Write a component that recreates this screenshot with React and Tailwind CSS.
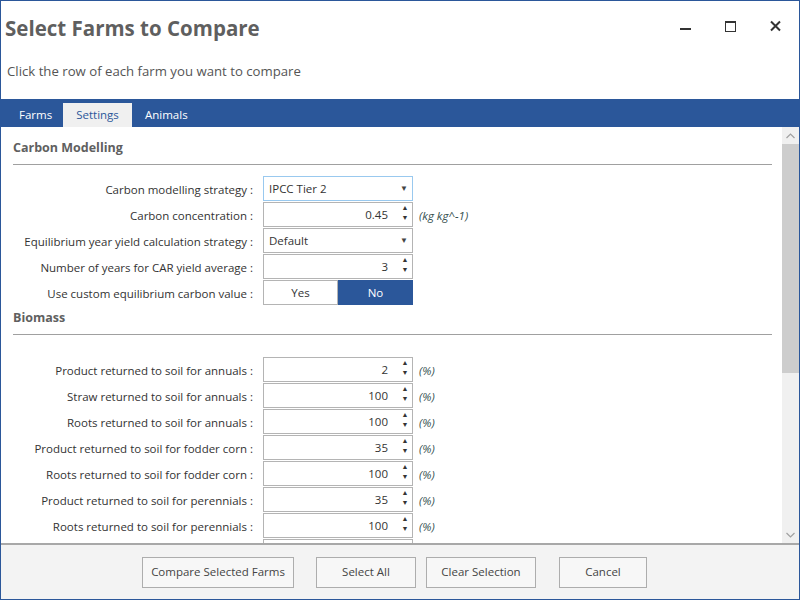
import React from "react";

const carbonRows = [
  { label: "Carbon modelling strategy :", type: "select", value: "IPCC Tier 2", focused: true },
  { label: "Carbon concentration :", type: "number", value: "0.45", unit: "(kg kg^-1)" },
  { label: "Equilibrium year yield calculation strategy :", type: "select", value: "Default" },
  { label: "Number of years for CAR yield average :", type: "number", value: "3" },
  { label: "Use custom equilibrium carbon value :", type: "toggle" },
];

const biomassRows = [
  { label: "Product returned to soil for annuals :", value: "2" },
  { label: "Straw returned to soil for annuals :", value: "100" },
  { label: "Roots returned to soil for annuals :", value: "100" },
  { label: "Product returned to soil for fodder corn :", value: "35" },
  { label: "Roots returned to soil for fodder corn :", value: "100" },
  { label: "Product returned to soil for perennials :", value: "35" },
  { label: "Roots returned to soil for perennials :", value: "100" },
  { label: "", value: "100" },
];

function Spinner() {
  return (
    <div className="flex w-[10px] flex-col items-center justify-center leading-none text-[#333] text-[7px]">
      <span className="h-[10px]">▲</span>
      <span className="h-[10px]">▼</span>
    </div>
  );
}

function Field({ row }) {
  if (row.type === "toggle") {
    return (
      <div className="flex h-[25px] w-[150px]">
        <div className="flex w-[75px] items-center justify-center border border-[#b4b4b4] bg-white pt-[1px] text-[11.5px] text-[#333]">
          Yes
        </div>
        <div className="flex w-[75px] items-center justify-center bg-[#2b579a] pt-[1px] text-[11.5px] text-white">
          No
        </div>
      </div>
    );
  }
  if (row.type === "select") {
    return (
      <div
        className={`flex h-[25px] w-[150px] items-center border bg-white pl-[5px] pr-[4px] text-[11.5px] text-[#333] ${
          row.focused ? "border-[#99c9ef]" : "border-[#b4b4b4]"
        }`}
      >
        <span className="flex-1 pt-[1px]">{row.value}</span>
        <span className="text-[8px] text-[#444]">▼</span>
      </div>
    );
  }
  return (
    <div className="flex h-[25px] w-[150px] items-center border border-[#b4b4b4] bg-white pr-[2px] text-[11.5px] text-[#333]">
      <span className="flex-1 pr-[12px] pt-[1px] text-right">{row.value}</span>
      <Spinner />
    </div>
  );
}

function Row({ row, unit }) {
  return (
    <div className="flex h-[26px] items-start">
      <div className="w-[252px] pt-[5px] text-right text-[11.5px] text-[#333]">{row.label}</div>
      <div className="ml-[10px]">
        <Field row={row} />
      </div>
      {unit && (
        <div className="ml-[6px] pt-[5px] text-[11.5px] italic text-[#35504f]">{unit}</div>
      )}
    </div>
  );
}

function SectionHeader({ title }) {
  return (
    <div className="mr-[10px] ml-[12px] border-b border-[#a0a0a0] pb-[6px] text-[12.5px] font-bold text-[#606060]">
      {title}
    </div>
  );
}

function FooterButton({ children, className }) {
  return (
    <button
      className={`h-[31px] shrink-0 border border-[#adadad] bg-[#f7f7f7] text-[11.5px] text-[#444] ${className}`}
    >
      {children}
    </button>
  );
}

export default function App() {
  return (
    <div className="flex h-[600px] w-[800px] flex-col overflow-hidden border border-[#2b579a] bg-white font-['Segoe_UI','Open_Sans',sans-serif]">
      <div className="relative h-[98px] shrink-0">
        <div className="pl-[4px] pt-[12px] text-[20.5px] font-bold leading-[30px] text-[#5f5f5f]">
          Select Farms to Compare
        </div>
        <div className="pl-[6px] pt-[19px] text-[13.2px] text-[#555]">
          Click the row of each farm you want to compare
        </div>
        <div className="absolute right-[18px] top-[19px] flex items-center gap-[34px] text-[#333]">
          <svg width="11" height="12" viewBox="0 0 11 12">
            <rect x="0" y="8" width="11" height="2" fill="#333" />
          </svg>
          <svg width="11" height="12" viewBox="0 0 11 12">
            <rect x="0.5" y="1.5" width="10" height="10" fill="none" stroke="#333" />
            <rect x="0" y="1" width="11" height="2" fill="#333" />
          </svg>
          <svg width="11" height="12" viewBox="0 0 11 12">
            <path d="M1 1.5 L10 10.5 M10 1.5 L1 10.5" stroke="#333" strokeWidth="2" />
          </svg>
        </div>
      </div>

      <div className="flex h-[28px] shrink-0 items-end bg-[#2b579a] pl-[7px] text-[11.5px]">
        <div className="flex h-[24px] w-[55px] items-center pl-[11px] text-white">Farms</div>
        <div className="flex h-[24px] w-[69px] items-center justify-center bg-[#f0f0f0] text-[#2b579a]">
          Settings
        </div>
        <div className="flex h-[24px] items-center px-[13px] text-white">Animals</div>
      </div>

      <div className="flex min-h-0 flex-1">
        <div className="min-w-0 flex-1 overflow-hidden pt-[12px]">
          <SectionHeader title="Carbon Modelling" />
          <div className="mt-[11px]">
            {carbonRows.map((row) => (
              <Row key={row.label} row={row} unit={row.unit} />
            ))}
          </div>
          <div className="mt-[3px]">
            <SectionHeader title="Biomass" />
          </div>
          <div className="mt-[22px]">
            {biomassRows.map((row, i) => (
              <Row key={i} row={row} unit={row.label ? "(%)" : null} />
            ))}
          </div>
        </div>
        <div className="flex w-[17px] shrink-0 flex-col bg-[#f0f0f0]">
          <div className="flex h-[17px] items-center justify-center">
            <svg width="9" height="6" viewBox="0 0 9 6">
              <path d="M0.5 5 L4.5 1 L8.5 5" fill="none" stroke="#a0a0a0" strokeWidth="1.2" />
            </svg>
          </div>
          <div className="h-[229px] bg-[#cdcdcd]" />
          <div className="flex-1" />
          <div className="flex h-[17px] items-center justify-center">
            <svg width="9" height="6" viewBox="0 0 9 6">
              <path d="M0.5 1 L4.5 5 L8.5 1" fill="none" stroke="#a0a0a0" strokeWidth="1.2" />
            </svg>
          </div>
        </div>
      </div>

      <div className="flex h-[56px] shrink-0 items-center border-t-2 border-[#a8a8a8] bg-[#f3f3f3] pl-[141px]">
        <FooterButton className="w-[152px]">Compare Selected Farms</FooterButton>
        <FooterButton className="ml-[22px] w-[100px]">Select All</FooterButton>
        <FooterButton className="ml-[10px] w-[110px]">Clear Selection</FooterButton>
        <FooterButton className="ml-[23px] w-[88px]">Cancel</FooterButton>
      </div>
    </div>
  );
}
